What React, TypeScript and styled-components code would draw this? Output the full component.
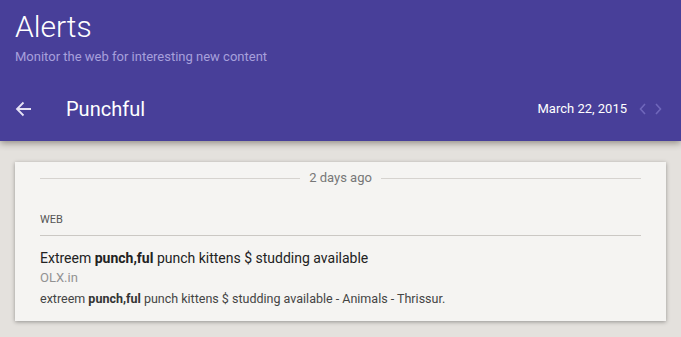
import React from "react";
import styled, { createGlobalStyle } from "styled-components";

const GlobalStyle = createGlobalStyle`
  html, body {
    margin: 0;
    padding: 0;
    background: #e4e1dd;
    font-family: Roboto, "Liberation Sans", sans-serif;
  }
`;

const Page = styled.div`
  width: 681px;
  height: 337px;
  overflow: hidden;
  background: #e4e1dd;
`;

const Header = styled.header`
  position: relative;
  z-index: 1;
  height: 141px;
  box-sizing: border-box;
  padding: 9px 15px 0;
  background: #483f99;
  box-shadow: 0 2px 7px rgba(40, 30, 20, 0.45);
  color: #fff;
`;

const AppTitle = styled.h1`
  margin: 0;
  font-size: 30px;
  line-height: 36px;
  font-weight: 300;
  color: #fff;
`;

const Subtitle = styled.div`
  margin-top: 3px;
  font-size: 13px;
  line-height: 18px;
  color: #a7a0dc;
`;

const NavRow = styled.div`
  display: flex;
  align-items: center;
  height: 30px;
  margin-top: 28px;
`;

const BackButton = styled.div`
  width: 51px;
  display: flex;
  align-items: center;
`;

const PageTitle = styled.div`
  flex: 1;
  font-size: 20px;
  line-height: 30px;
  color: #fff;
`;

const DateLabel = styled.div`
  font-size: 13px;
  line-height: 30px;
  color: #fff;
  margin-right: 12px;
`;

const Pager = styled.div`
  display: flex;
  align-items: center;
  gap: 9px;
  margin-right: 4px;
`;

const Main = styled.main`
  padding: 21px 15px 0;
`;

const Card = styled.section`
  background: #f5f4f2;
  padding: 8px 25px 14px;
  box-shadow: 0 1px 4px rgba(0, 0, 0, 0.35);
`;

const DayDivider = styled.div`
  display: flex;
  align-items: center;
  gap: 9px;
  font-size: 13px;
  line-height: 16px;
  color: #777;

  &::before,
  &::after {
    content: "";
    flex: 1;
    height: 1px;
    background: #d6d3cf;
  }
`;

const SectionLabel = styled.div`
  margin-top: 27px;
  padding-bottom: 8px;
  border-bottom: 1px solid #cbc8c4;
  font-size: 11px;
  line-height: 14px;
  color: #555;
`;

const ResultTitle = styled.div`
  margin-top: 12px;
  font-size: 14px;
  line-height: 20px;
  color: #222;

  & b {
    font-weight: 700;
  }
`;

const ResultSource = styled.div`
  margin-top: 1px;
  font-size: 13px;
  line-height: 18px;
  color: #929292;
`;

const ResultSnippet = styled.div`
  margin-top: 4px;
  font-size: 12.5px;
  line-height: 16px;
  color: #444;

  & b {
    font-weight: 700;
    color: #333;
  }
`;

const ArrowLeft = () => (
  <svg width="17" height="16" viewBox="0 0 17 16" fill="none">
    <path d="M16 8H2M8.5 1.5L2 8l6.5 6.5" stroke="#e6e3f5" strokeWidth="1.8" />
  </svg>
);

const Chevron = ({ dir }: { dir: "left" | "right" }) => (
  <svg width="7" height="12" viewBox="0 0 7 12" fill="none">
    <path
      d={dir === "left" ? "M6 1L1.5 6 6 11" : "M1 1l4.5 5L1 11"}
      stroke="#6f67bb"
      strokeWidth="1.6"
    />
  </svg>
);

export default function App() {
  return (
    <Page>
      <GlobalStyle />
      <Header>
        <AppTitle>Alerts</AppTitle>
        <Subtitle>Monitor the web for interesting new content</Subtitle>
        <NavRow>
          <BackButton>
            <ArrowLeft />
          </BackButton>
          <PageTitle>Punchful</PageTitle>
          <DateLabel>March 22, 2015</DateLabel>
          <Pager>
            <Chevron dir="left" />
            <Chevron dir="right" />
          </Pager>
        </NavRow>
      </Header>
      <Main>
        <Card>
          <DayDivider>2 days ago</DayDivider>
          <SectionLabel>WEB</SectionLabel>
          <ResultTitle>
            Extreem <b>punch,ful</b> punch kittens $ studding available
          </ResultTitle>
          <ResultSource>OLX.in</ResultSource>
          <ResultSnippet>
            extreem <b>punch,ful</b> punch kittens $ studding available - Animals - Thrissur.
          </ResultSnippet>
        </Card>
      </Main>
    </Page>
  );
}
